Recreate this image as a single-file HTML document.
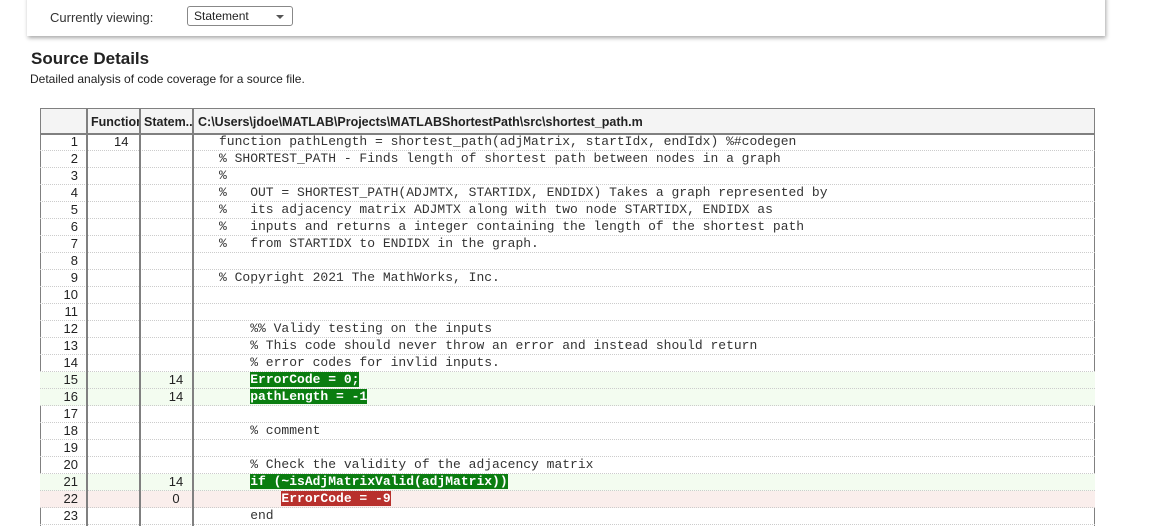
<!DOCTYPE html>
<html><head><meta charset="utf-8"><style>
html,body{margin:0;width:1171px;height:526px;overflow:hidden;background:#fff;font-family:"Liberation Sans",Arial,sans-serif;position:relative}
.panel{position:absolute;left:27px;top:-5px;width:1078px;height:41px;background:#fff;box-shadow:1px 2px 4px rgba(0,0,0,.35)}
.lbl{position:absolute;left:23px;top:15px;font-size:13px;color:#333}
.sel{position:absolute;left:160px;top:11px;width:106px;height:20px;border:1px solid #888;border-radius:3px;box-sizing:border-box;font-size:12px;color:#222;padding:2px 0 0 6px}
.sel:after{content:"";position:absolute;right:8px;top:8px;border-left:4px solid transparent;border-right:4px solid transparent;border-top:4px solid #555}
h2{position:absolute;left:31px;top:49px;margin:0;font-size:17px;font-weight:bold;color:#222}
.sub{position:absolute;left:30px;top:72px;font-size:12px;color:#222}
.tbl{position:absolute;left:40px;top:108px;width:1055px;height:430px;border:1px solid #808080;box-sizing:border-box}
.hdr{position:absolute;left:0;top:0;width:100%;height:26px;background:#f4f4f4;border-bottom:2px solid #808080;box-sizing:border-box}
.h{position:absolute;top:6px;font-family:"Liberation Sans Narrow","Liberation Sans",sans-serif;font-weight:bold;font-size:12.5px;color:#222;white-space:nowrap;overflow:hidden}
.row{position:absolute;left:0;width:100%;height:17px;border-bottom:1px dotted #ccc;box-sizing:border-box;font-size:13px;color:#222}
.row.g{background:#f3fcf0}.row.r{background:#faeeec}
.n{position:absolute;right:1017px;top:0;line-height:16px}
.f{position:absolute;left:74px;top:0;line-height:16px}
.s{position:absolute;left:126px;top:0;line-height:16px;width:20px;text-align:center}
.c{position:absolute;left:179px;top:0;line-height:16px;font-family:"Liberation Mono",monospace;font-size:13px;white-space:pre;color:#333}
.hg{background:#0a7d10;color:#fff;font-weight:bold}
.hr{background:#b8302c;color:#fff;font-weight:bold}
</style></head><body>
<div class="panel"><div class="lbl">Currently viewing:</div><div class="sel">Statement</div></div>
<h2>Source Details</h2>
<div class="sub">Detailed analysis of code coverage for a source file.</div>
<div class="tbl">
<div class="hdr">
<div class="h" style="left:50px;width:48px">Function</div>
<div class="h" style="left:103px">Statem..</div>
<div class="h" style="left:157px">C:\Users\jdoe\MATLAB\Projects\MATLABShortestPath\src\shortest_path.m</div>
</div>
</div>
<div style="position:absolute;left:40px;top:134px;width:1055px">
<div class="row" style="top:0"><span class="n">1</span><span class="f">14</span><span class="c">function pathLength = shortest_path(adjMatrix, startIdx, endIdx) %#codegen</span></div>
<div class="row" style="top:17px"><span class="n">2</span><span class="c">% SHORTEST_PATH - Finds length of shortest path between nodes in a graph</span></div>
<div class="row" style="top:34px"><span class="n">3</span><span class="c">%</span></div>
<div class="row" style="top:51px"><span class="n">4</span><span class="c">%   OUT = SHORTEST_PATH(ADJMTX, STARTIDX, ENDIDX) Takes a graph represented by</span></div>
<div class="row" style="top:68px"><span class="n">5</span><span class="c">%   its adjacency matrix ADJMTX along with two node STARTIDX, ENDIDX as</span></div>
<div class="row" style="top:85px"><span class="n">6</span><span class="c">%   inputs and returns a integer containing the length of the shortest path</span></div>
<div class="row" style="top:102px"><span class="n">7</span><span class="c">%   from STARTIDX to ENDIDX in the graph.</span></div>
<div class="row" style="top:119px"><span class="n">8</span></div>
<div class="row" style="top:136px"><span class="n">9</span><span class="c">% Copyright 2021 The MathWorks, Inc.</span></div>
<div class="row" style="top:153px"><span class="n">10</span></div>
<div class="row" style="top:170px"><span class="n">11</span></div>
<div class="row" style="top:187px"><span class="n">12</span><span class="c">    %% Validy testing on the inputs</span></div>
<div class="row" style="top:204px"><span class="n">13</span><span class="c">    % This code should never throw an error and instead should return</span></div>
<div class="row" style="top:221px"><span class="n">14</span><span class="c">    % error codes for invlid inputs.</span></div>
<div class="row g" style="top:238px"><span class="n">15</span><span class="s">14</span><span class="c">    <span class="hg">ErrorCode = 0;</span></span></div>
<div class="row g" style="top:255px"><span class="n">16</span><span class="s">14</span><span class="c">    <span class="hg">pathLength = -1</span></span></div>
<div class="row" style="top:272px"><span class="n">17</span></div>
<div class="row" style="top:289px"><span class="n">18</span><span class="c">    % comment</span></div>
<div class="row" style="top:306px"><span class="n">19</span></div>
<div class="row" style="top:323px"><span class="n">20</span><span class="c">    % Check the validity of the adjacency matrix</span></div>
<div class="row g" style="top:340px"><span class="n">21</span><span class="s">14</span><span class="c">    <span class="hg">if (~isAdjMatrixValid(adjMatrix))</span></span></div>
<div class="row r" style="top:357px"><span class="n">22</span><span class="s">0</span><span class="c">        <span class="hr">ErrorCode = -9</span></span></div>
<div class="row" style="top:374px"><span class="n">23</span><span class="c">    end</span></div>
</div>
<div style="position:absolute;left:86px;top:108px;width:2px;height:420px;background:#808080"></div>
<div style="position:absolute;left:139px;top:108px;width:2px;height:420px;background:#808080"></div>
<div style="position:absolute;left:192px;top:108px;width:2px;height:420px;background:#808080"></div>
</body></html>
